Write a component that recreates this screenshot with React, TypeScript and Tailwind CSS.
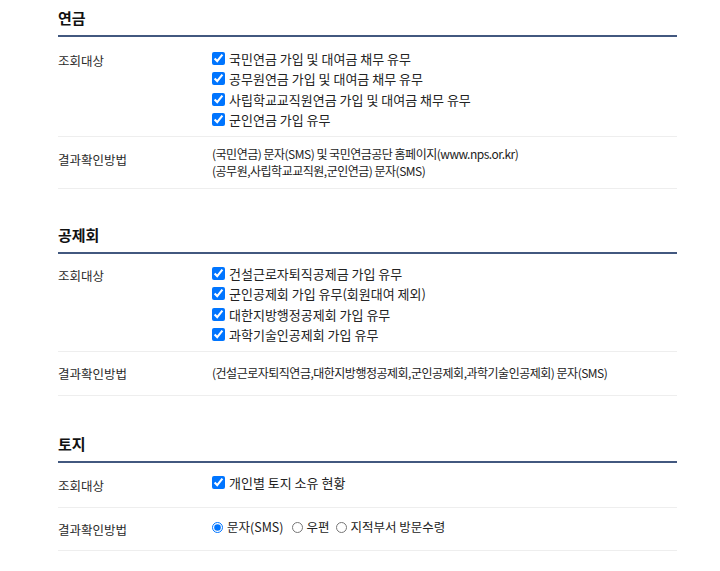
import React from "react";

const font = "font-['Noto_Sans_CJK_KR','Noto_Sans',sans-serif]";

function Check({ label }: { label: string }) {
  return (
    <label className="flex items-center h-[20.5px] text-[13px] text-[#222]">
      <input type="checkbox" defaultChecked readOnly className="m-0 w-[13px] h-[13px] mr-[4px]" />
      <span>{label}</span>
    </label>
  );
}

function Heading({ title }: { title: string }) {
  return (
    <div className="h-[37px] border-b-2 border-[#42587f] flex items-start">
      <h2 className="text-[15px] font-bold text-[#111] leading-[20px] mt-[8px]">{title}</h2>
    </div>
  );
}

function Row({
  label,
  h,
  labelPt,
  contentPt,
  children,
}: {
  label: string;
  h: string;
  labelPt: string;
  contentPt: string;
  children: React.ReactNode;
}) {
  return (
    <div className={`flex border-b border-[#eeeeee] ${h}`}>
      <div className={`w-[154px] text-[12.5px] text-[#2a2a2a] leading-[20px] ${labelPt}`}>{label}</div>
      <div className={`flex-1 ${contentPt}`}>{children}</div>
    </div>
  );
}

function Radio({ label, checked, mr }: { label: string; checked?: boolean; mr: string }) {
  return (
    <label className={`flex items-center text-[12.5px] text-[#222] ${mr}`}>
      <input type="radio" name="land" defaultChecked={checked} readOnly className="m-0 w-[11px] h-[11px] mr-[4px]" />
      <span>{label}</span>
    </label>
  );
}

export default function App() {
  return (
    <div className={`w-[720px] h-[571px] bg-white overflow-hidden ${font}`}>
      <div className="ml-[58px] w-[619px]">
        <section>
          <Heading title="연금" />
          <Row label="조회대상" h="h-[100px]" labelPt="pt-[14px]" contentPt="pt-[11px]">
            <Check label="국민연금 가입 및 대여금 채무 유무" />
            <Check label="공무원연금 가입 및 대여금 채무 유무" />
            <Check label="사립학교교직원연금 가입 및 대여금 채무 유무" />
            <Check label="군인연금 가입 유무" />
          </Row>
          <Row label="결과확인방법" h="h-[52px]" labelPt="pt-[13px]" contentPt="pt-[8px]">
            <div className="text-[12px] leading-[17px] tracking-[-0.5px] text-[#222]">
              <div>(국민연금) 문자(SMS) 및 국민연금공단 홈페이지(www.nps.or.kr)</div>
              <div>(공무원,사립학교교직원,군인연금) 문자(SMS)</div>
            </div>
          </Row>
        </section>

        <section className="mt-[28px]">
          <Heading title="공제회" />
          <Row label="조회대상" h="h-[98px]" labelPt="pt-[12px]" contentPt="pt-[9px]">
            <Check label="건설근로자퇴직공제금 가입 유무" />
            <Check label="군인공제회 가입 유무(회원대여 제외)" />
            <Check label="대한지방행정공제회 가입 유무" />
            <Check label="과학기술인공제회 가입 유무" />
          </Row>
          <Row label="결과확인방법" h="h-[44px]" labelPt="pt-[12px]" contentPt="pt-[12px]">
            <div className="text-[12px] leading-[17px] tracking-[-0.5px] text-[#222]">
              (건설근로자퇴직연금,대한지방행정공제회,군인공제회,과학기술인공제회) 문자(SMS)
            </div>
          </Row>
        </section>

        <section className="mt-[30px]">
          <Heading title="토지" />
          <Row label="조회대상" h="h-[45px]" labelPt="pt-[13px]" contentPt="pt-[9px]">
            <Check label="개인별 토지 소유 현황" />
          </Row>
          <Row label="결과확인방법" h="h-[43px]" labelPt="pt-[12px]" contentPt="pt-[9px]">
            <div className="flex items-center h-[20px]">
              <Radio label="문자(SMS)" checked mr="mr-[8px]" />
              <Radio label="우편" mr="mr-[6px]" />
              <Radio label="지적부서 방문수령" mr="mr-0" />
            </div>
          </Row>
        </section>
      </div>
    </div>
  );
}
